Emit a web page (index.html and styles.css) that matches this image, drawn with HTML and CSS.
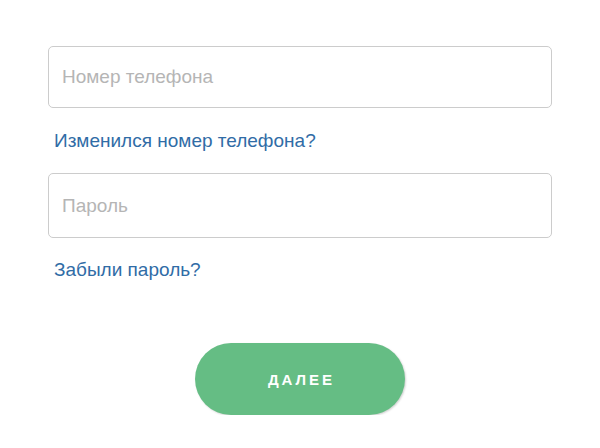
FILE: index.html
```html
<!DOCTYPE html>
<html lang="ru">
<head>
<meta charset="utf-8">
<link rel="stylesheet" href="styles.css">
</head>
<body>
<form class="login">
  <input class="field field-phone" type="tel" placeholder="Номер телефона">
  <a class="link" href="#">Изменился номер телефона?</a>
  <input class="field field-pass" type="password" placeholder="Пароль">
  <a class="link link-forgot" href="#">Забыли пароль?</a>
  <div class="actions">
    <button class="submit" type="button">ДАЛЕЕ</button>
  </div>
</form>
</body>
</html>
```
FILE: styles.css
```css
html, body {
  margin: 0;
  padding: 0;
  background: #ffffff;
}
body {
  font-family: "Liberation Sans", Arial, sans-serif;
}
.login {
  width: 504px;
  margin: 46px 0 0 48px;
  display: flex;
  flex-direction: column;
}
.field {
  box-sizing: border-box;
  width: 504px;
  height: 62px;
  margin: 0;
  padding: 0 13px;
  border: 1px solid #cccccc;
  border-radius: 5px;
  font-family: "Liberation Sans", Arial, sans-serif;
  font-size: 19px;
  color: #333;
  background: #fff;
  outline: none;
}
.field-pass {
  height: 65px;
}
.field::placeholder {
  color: #b5b5b5;
}
.link {
  display: block;
  height: 65px;
  line-height: 65px;
  padding-left: 6px;
  font-size: 19px;
  color: #306ca6;
  text-decoration: none;
}
.link-forgot {
  height: 63px;
  line-height: 63px;
}
.actions {
  display: flex;
  justify-content: center;
  margin-top: 42px;
}
.submit {
  width: 210px;
  height: 72px;
  border: none;
  border-radius: 36px;
  background: #65bd84;
  color: #ffffff;
  font-family: "Liberation Sans", Arial, sans-serif;
  font-weight: bold;
  font-size: 15px;
  letter-spacing: 3px;
  padding: 0 0 0 3px;
  box-shadow: 1px 1px 2px rgba(0, 0, 0, 0.18);
  cursor: pointer;
}
```
